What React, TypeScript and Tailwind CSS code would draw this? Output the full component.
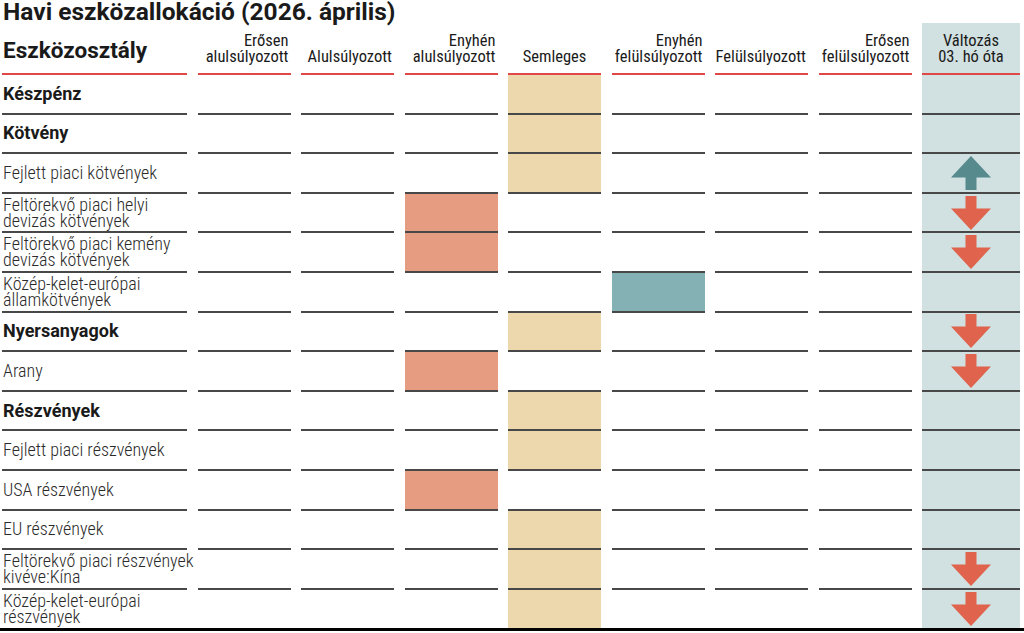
import React from "react";

type Row = {
  label: string[];
  bold?: boolean;
  pos: number; // which of the 7 weighting columns is filled
  change?: "up" | "down";
};

const rows: Row[] = [
  { label: ["Készpénz"], bold: true, pos: 3 },
  { label: ["Kötvény"], bold: true, pos: 3 },
  { label: ["Fejlett piaci kötvények"], pos: 3, change: "up" },
  { label: ["Feltörekvő piaci helyi", "devizás kötvények"], pos: 2, change: "down" },
  { label: ["Feltörekvő piaci kemény", "devizás kötvények"], pos: 2, change: "down" },
  { label: ["Közép-kelet-európai", "államkötvények"], pos: 4 },
  { label: ["Nyersanyagok"], bold: true, pos: 3, change: "down" },
  { label: ["Arany"], pos: 2, change: "down" },
  { label: ["Részvények"], bold: true, pos: 3 },
  { label: ["Fejlett piaci részvények"], pos: 3 },
  { label: ["USA részvények"], pos: 2 },
  { label: ["EU részvények"], pos: 3 },
  { label: ["Feltörekvő piaci részvények", "kivéve:Kína"], pos: 3, change: "down" },
  { label: ["Közép-kelet-európai", "részvények"], pos: 3, change: "down" },
];

const headers: string[][] = [
  ["Erősen", "alulsúlyozott"],
  ["Alulsúlyozott"],
  ["Enyhén", "alulsúlyozott"],
  ["Semleges"],
  ["Enyhén", "felülsúlyozott"],
  ["Felülsúlyozott"],
  ["Erősen", "felülsúlyozott"],
];

const fills: Record<number, string> = {
  2: "bg-[#e69c80]",
  3: "bg-[#edd8ae]",
  4: "bg-[#84b1b4]",
};

const condensed = "font-['Roboto_Condensed',Roboto,sans-serif] font-stretch-condensed";

function Arrow({ dir }: { dir: "up" | "down" }) {
  if (dir === "up") {
    return (
      <svg width="40" height="34" viewBox="0 0 40 34">
        <path d="M20 0 40 21.5H25.5V34h-11V21.5H0z" fill="#568a8d" />
      </svg>
    );
  }
  return (
    <svg width="40" height="34" viewBox="0 0 40 34">
      <path d="M14.5 0h11v12.5H40L20 34 0 12.5h14.5z" fill="#df634d" />
    </svg>
  );
}

export default function App() {
  return (
    <div className="w-[1024px] h-[633px] bg-white text-[#1a1a1a] font-['Roboto',sans-serif] overflow-hidden">
      <h1 className="h-[23px] pl-[3px] text-[24.5px] leading-[23px] font-bold whitespace-nowrap">
        Havi eszközallokáció (2026. április)
      </h1>

      <div className="grid grid-cols-[185px_repeat(7,93px)_98px] gap-x-[10.5px] pl-[2px] border-b-[3px] border-black">
        {/* header */}
        <div className="h-[52px] flex items-end pb-[12px] pl-[1px] border-b-2 border-[#e04848] text-[22.5px] leading-[22px] font-bold">
          Eszközosztály
        </div>
        {headers.map((h, i) => (
          <div
            key={i}
            className={`h-[52px] flex flex-col pb-[8px] border-b-2 border-[#e04848] text-[16.5px] leading-[16px] ${condensed} ${
              i === 3 ? "items-center justify-end" : "items-end justify-end text-right pr-[2px]"
            }`}
          >
            {h.map((t) => (
              <span key={t} className="whitespace-nowrap">
                {t}
              </span>
            ))}
          </div>
        ))}
        <div
          className={`h-[52px] flex flex-col items-center justify-end pb-[8px] border-b-2 border-[#e04848] bg-[#d1e0e0] text-[16.5px] leading-[16px] ${condensed}`}
        >
          <span>Változás</span>
          <span>03. hó óta</span>
        </div>

        {/* body */}
        {rows.map((r, ri) => {
          const last = ri === rows.length - 1;
          const line = last ? "h-[38px]" : "h-[39.6px] border-b-2 border-[#484848]";
          return (
            <React.Fragment key={ri}>
              <div
                className={`${line} flex flex-col justify-center pl-[1px] ${
                  r.bold
                    ? "text-[18px] leading-[20px] font-bold"
                    : `text-[18px] leading-[16px] font-light text-[#2a2a2a] ${condensed}`
                }`}
              >
                {r.label.map((t) => (
                  <span key={t} className="whitespace-nowrap">
                    {t}
                  </span>
                ))}
              </div>
              {headers.map((_, ci) => (
                <div key={ci} className={`${line} ${ci === r.pos ? fills[r.pos] : ""}`} />
              ))}
              <div className={`${line} bg-[#d1e0e0] flex items-center justify-center`}>
                {r.change && <Arrow dir={r.change} />}
              </div>
            </React.Fragment>
          );
        })}
      </div>
    </div>
  );
}
